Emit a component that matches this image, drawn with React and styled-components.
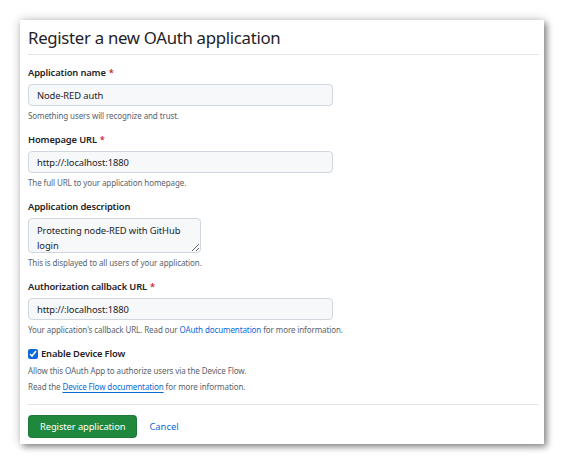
import styled, { createGlobalStyle } from "styled-components";

const GlobalStyle = createGlobalStyle`
  * { box-sizing: border-box; }
  body {
    margin: 0;
    background: #ffffff;
    font-family: "Noto Sans", "Open Sans", sans-serif;
    color: #1f2328;
  }
`;

const Page = styled.div`
  width: 564px;
  height: 464px;
  padding: 20px;
`;

const Card = styled.div`
  width: 524px;
  height: 424px;
  background: #ffffff;
  padding: 0 5px 0 8px;
  box-shadow: 0 0 10px rgba(0, 0, 0, 0.22), 3px 3px 6px rgba(0, 0, 0, 0.38);
  display: flex;
  flex-direction: column;
`;

const Header = styled.div`
  padding: 7px 0 6px;
  border-bottom: 1px solid #e1e4e8;
`;

const Title = styled.h1`
  margin: 0;
  font-size: 16.8px;
  font-weight: 400;
  line-height: 21px;
  letter-spacing: -0.3px;
`;

const Form = styled.form`
  display: flex;
  flex-direction: column;
  padding-top: 11px;
`;

const Group = styled.div`
  display: flex;
  flex-direction: column;
  margin-bottom: ${(p) => (p.$last ? 0 : 11)}px;
`;

const Label = styled.label`
  font-size: 9.4px;
  font-weight: 600;
  line-height: 14px;
  letter-spacing: -0.15px;
  margin-bottom: 4px;
`;

const Required = styled.span`
  color: #d1242f;
  margin-left: 3px;
`;

const Input = styled.input`
  width: 305px;
  height: 22px;
  padding: 0 8px;
  font-family: inherit;
  font-size: 9.4px;
  letter-spacing: -0.1px;
  color: #1f2328;
  background: #f6f8fa;
  border: 1px solid #d0d7de;
  border-radius: 4px;
  outline: none;
`;

const TextArea = styled.textarea`
  width: 173px;
  height: 35px;
  padding: 4px 8px 0;
  font-family: inherit;
  font-size: 9.4px;
  letter-spacing: -0.1px;
  line-height: 15px;
  color: #1f2328;
  background: #f6f8fa;
  border: 1px solid #d0d7de;
  border-radius: 4px;
  outline: none;
  resize: both;
  overflow: hidden;
`;

const Note = styled.p`
  margin: 4px 0 0;
  font-size: 8px;
  line-height: 12px;
  letter-spacing: -0.1px;
  color: #59636e;
`;

const Link = styled.a`
  color: #0969da;
  text-decoration: ${(p) => (p.$underline ? "underline" : "none")};
  text-underline-offset: 2px;
`;

const CheckRow = styled.label`
  display: flex;
  align-items: center;
  gap: 3px;
  font-size: 9.4px;
  font-weight: 600;
  letter-spacing: -0.15px;
  line-height: 14px;
`;

const Check = styled.input`
  width: 10px;
  height: 10px;
  margin: 0;
  accent-color: #0969da;
`;

const Footer = styled.div`
  margin-top: 11px;
  margin-right: 1px;
  padding-top: 10px;
  border-top: 1px solid #e1e4e8;
  display: flex;
  align-items: center;
  gap: 12px;
`;

const Button = styled.button`
  height: 23px;
  padding: 0 11px;
  font-family: inherit;
  font-size: 9.4px;
  letter-spacing: -0.1px;
  color: #ffffff;
  background: #1f883d;
  border: 1px solid rgba(31, 35, 40, 0.15);
  border-radius: 4px;
  cursor: pointer;
`;

const CancelLink = styled.a`
  font-size: 9.4px;
  color: #0969da;
  text-decoration: none;
`;

export default function App() {
  return (
    <>
      <GlobalStyle />
      <Page>
        <Card>
          <Header>
            <Title>Register a new OAuth application</Title>
          </Header>
          <Form>
            <Group>
              <Label>
                Application name<Required>*</Required>
              </Label>
              <Input defaultValue="Node-RED auth" />
              <Note>Something users will recognize and trust.</Note>
            </Group>
            <Group>
              <Label>
                Homepage URL<Required>*</Required>
              </Label>
              <Input defaultValue="http://:localhost:1880" />
              <Note>The full URL to your application homepage.</Note>
            </Group>
            <Group>
              <Label>Application description</Label>
              <TextArea defaultValue="Protecting node-RED with GitHub login" />
              <Note>This is displayed to all users of your application.</Note>
            </Group>
            <Group>
              <Label>
                Authorization callback URL<Required>*</Required>
              </Label>
              <Input defaultValue="http://:localhost:1880" />
              <Note>
                Your application's callback URL. Read our{" "}
                <Link>OAuth documentation</Link> for more information.
              </Note>
            </Group>
            <Group $last>
              <CheckRow>
                <Check type="checkbox" defaultChecked />
                Enable Device Flow
              </CheckRow>
              <Note>Allow this OAuth App to authorize users via the Device Flow.</Note>
              <Note>
                Read the <Link $underline>Device Flow documentation</Link> for more
                information.
              </Note>
            </Group>
            <Footer>
              <Button type="button">Register application</Button>
              <CancelLink>Cancel</CancelLink>
            </Footer>
          </Form>
        </Card>
      </Page>
    </>
  );
}
